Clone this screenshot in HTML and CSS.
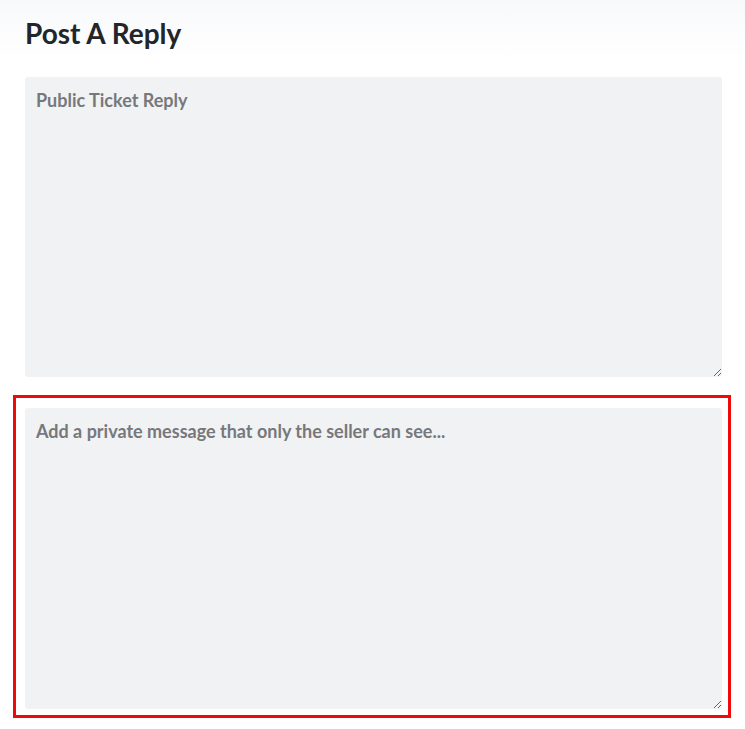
FILE: index.html
```html
<!DOCTYPE html>
<html lang="en">
<head>
<meta charset="utf-8">
<title>Post A Reply</title>
<link rel="stylesheet" href="styles.css">
</head>
<body>
<main class="reply">
  <h1 class="reply-title">Post A Reply</h1>
  <textarea class="reply-box" placeholder="Public Ticket Reply"></textarea>
  <div class="private-wrap">
    <textarea class="reply-box" placeholder="Add a private message that only the seller can see..."></textarea>
  </div>
</main>
</body>
</html>
```

FILE: styles.css
```css
html, body {
  margin: 0;
  padding: 0;
  background: #ffffff;
}
body {
  font-family: Lato, "Open Sans", sans-serif;
  background: linear-gradient(#f8f9fb 0, #ffffff 60px) no-repeat;
  min-height: 729px;
}
.reply {
  display: flex;
  flex-direction: column;
  align-items: flex-start;
  padding: 16px 0 0 13px;
}
.reply-title {
  margin: 0 0 0 12px;
  font-size: 28px;
  font-weight: 700;
  line-height: 34px;
  color: #22262b;
}
.reply-box {
  display: block;
  box-sizing: border-box;
  width: 697px;
  height: 300px;
  margin: 0;
  padding: 12px 11px 11px;
  border: 0;
  border-radius: 3px;
  background: #f1f2f4;
  font-family: Lato, "Open Sans", sans-serif;
  font-size: 18px;
  font-weight: 700;
  line-height: normal;
  color: #333;
  outline: none;
}
.reply-box::placeholder {
  color: #77787b;
  opacity: 1;
}
.reply > .reply-box {
  margin: 27px 0 0 12px;
}
.private-wrap {
  margin-top: 18px;
  border: 3px solid #ee0a0a;
  padding: 10px 6px 6px 9px;
}
.private-wrap .reply-box {
  height: 301px;
}
```
